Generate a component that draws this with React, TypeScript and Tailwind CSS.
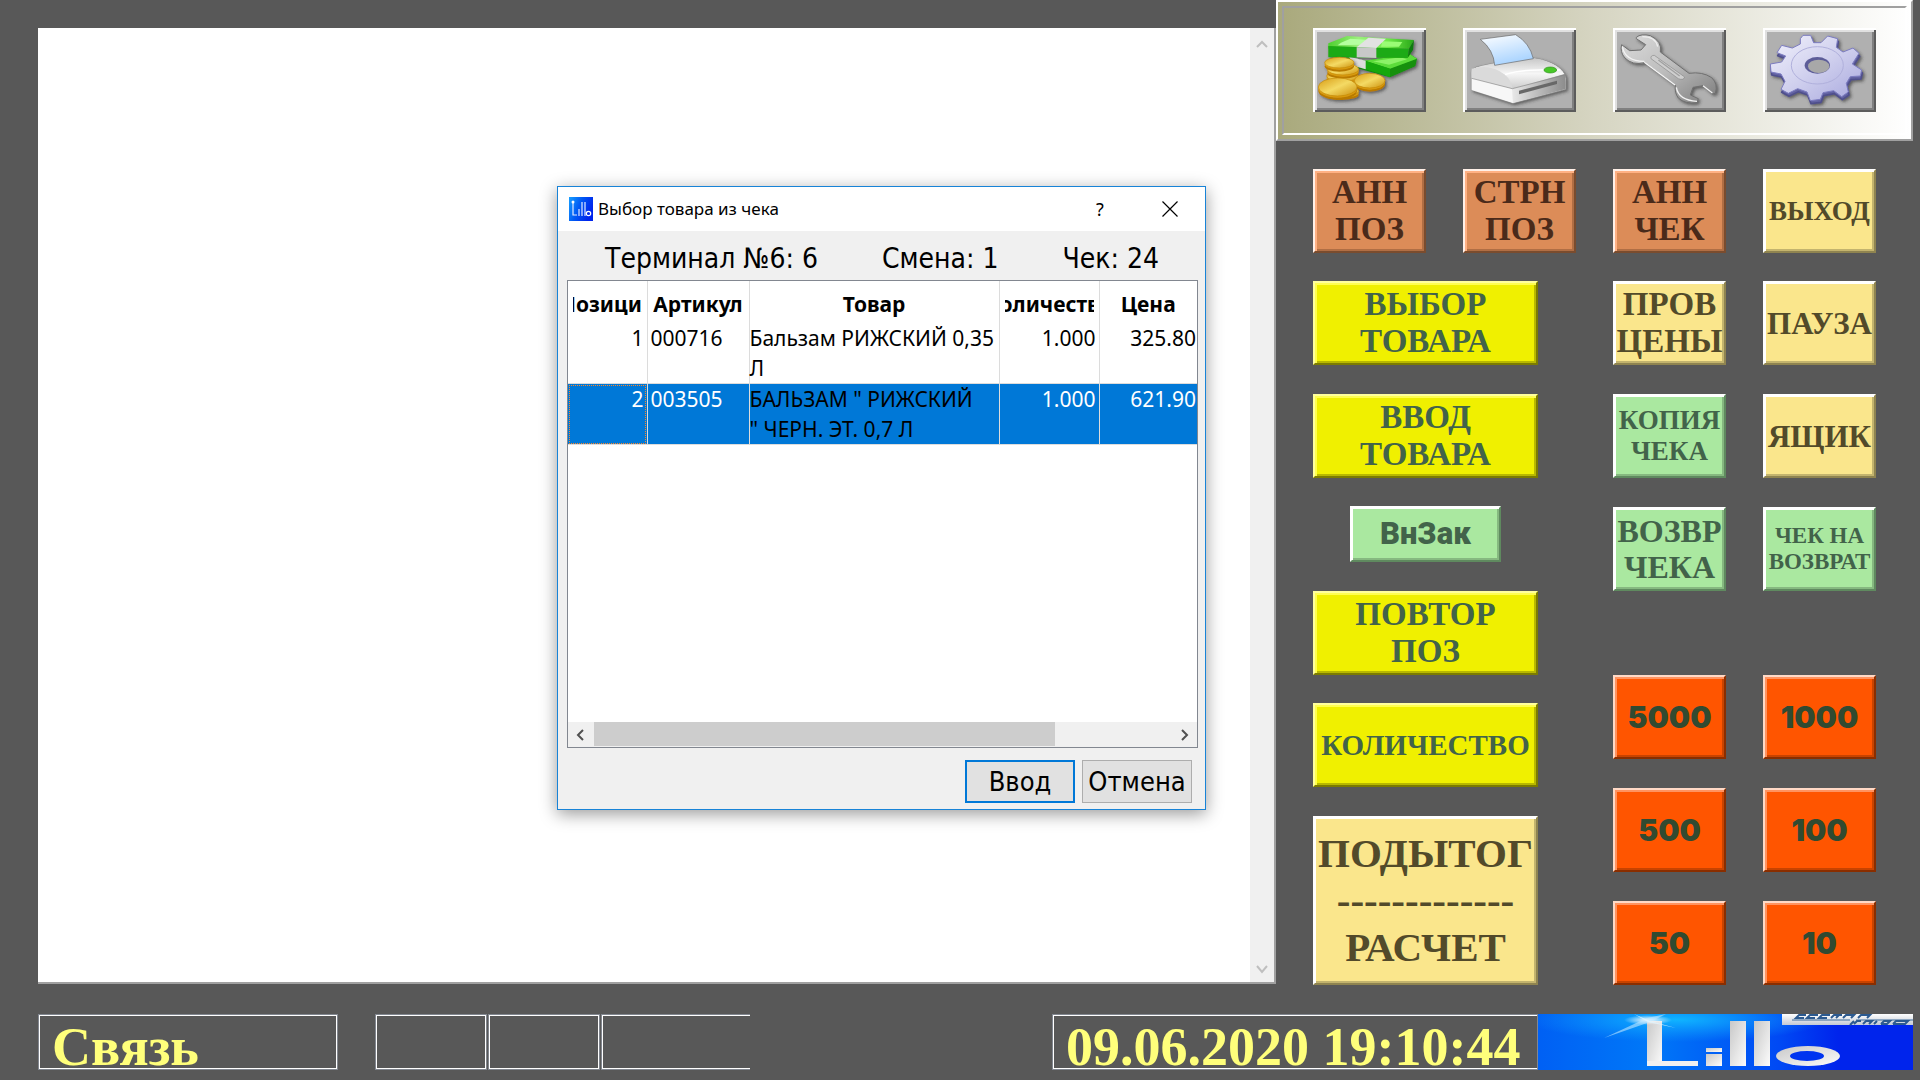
import type { ReactNode } from "react";

type Tone = "orange" | "cream" | "yellow" | "green" | "red";

const tones: Record<Tone, string> = {
  orange:
    "bg-[#dc8c58] text-[#4a2a1a] border-t-[#fff0e8] border-l-[#fff0e8] border-r-[#7a4c2e] border-b-[#7a4c2e] shadow-[inset_2px_2px_0_#ffb184,inset_-2px_-2px_0_#b06e44]",
  cream:
    "bg-[#fae68c] text-[#524a2a] border-t-white border-l-white border-r-[#8f8450] border-b-[#8f8450] shadow-[inset_1px_1px_0_#ffffff,inset_-2px_-2px_0_#c3b46e]",
  yellow:
    "bg-[#f0f000] text-[#42634a] border-t-[#ffff9c] border-l-[#ffff9c] border-r-[#7c7c00] border-b-[#7c7c00] shadow-[inset_2px_2px_0_#ffff50,inset_-2px_-2px_0_#b8b800]",
  green:
    "bg-[#aae8a0] text-[#42634a] border-t-white border-l-white border-r-[#5f8a5f] border-b-[#5f8a5f] shadow-[inset_1px_1px_0_#ffffff,inset_-2px_-2px_0_#86b880]",
  red: "bg-[#ff5500] text-[#314a31] border-t-[#ffd9c6] border-l-[#ffd9c6] border-r-[#8a2e00] border-b-[#8a2e00] shadow-[inset_2px_2px_0_#ff9360,inset_-2px_-2px_0_#c84300]",
};

function Key({ tone, className, lines }: { tone: Tone; className: string; lines: string[] }) {
  return (
    <button
      type="button"
      className={`flex flex-col items-center justify-center border-2 font-bold whitespace-nowrap ${tones[tone]} ${className}`}
    >
      {lines.map((l) => (
        <span key={l}>{l}</span>
      ))}
    </button>
  );
}

function ToolButton({ label, children }: { label: string; children: ReactNode }) {
  return (
    <button
      type="button"
      aria-label={label}
      className="h-[84px] w-[113px] bg-[#b0b0b0] shadow-[inset_2px_2px_0_#ffffff,inset_-2px_-2px_0_#5c5c5c,inset_4px_4px_0_#e0e0e0,inset_-4px_-4px_0_#808080]"
    >
      <svg viewBox="0 0 339 252" className="block h-full w-full">
        {children}
      </svg>
    </button>
  );
}

function Coin({ x, y, rx, ry }: { x: number; y: number; rx: number; ry: number }) {
  return (
    <g>
      <ellipse cx={x} cy={y + 11} rx={rx} ry={ry} fill="#b87a00" />
      <ellipse cx={x} cy={y + 5} rx={rx} ry={ry} fill="#d99b10" />
      <ellipse cx={x} cy={y} rx={rx} ry={ry} fill="url(#gold)" stroke="#c48a08" strokeWidth="2" />
    </g>
  );
}

function MoneyIcon() {
  return (
    <>
      <defs>
        <linearGradient id="gold" x1="0" y1="0" x2="1" y2="1">
          <stop offset="0" stopColor="#d89c14" />
          <stop offset="0.5" stopColor="#f4da64" />
          <stop offset="1" stopColor="#cc900c" />
        </linearGradient>
        <linearGradient id="bill" x1="0" y1="0" x2="1" y2="0">
          <stop offset="0" stopColor="#4fd030" />
          <stop offset="0.35" stopColor="#9cf07c" />
          <stop offset="0.7" stopColor="#6ee848" />
          <stop offset="1" stopColor="#28a818" />
        </linearGradient>
        <filter id="soft" x="-20%" y="-20%" width="140%" height="140%">
          <feDropShadow dx="5" dy="5" stdDeviation="4" floodColor="#303030" floodOpacity="0.65" />
        </filter>
      </defs>
      <g filter="url(#soft)">
        <path d="M100 88 L156 98 L290 78 L312 92 L307 115 L231 148 L100 112Z" fill="#12900c" />
        <path d="M156 98 L290 78 L312 92 L231 122Z" fill="#5bdc3a" />
        <path d="M180 100 L262 88 L282 94 L228 110Z" fill="#8cf268" />
        <path d="M156 98 L231 122 L231 148 L156 122Z" fill="#18a810" />
        <path d="M108 86 L158 98 L158 124 L122 114Z" fill="#dcdcdc" />
        <path d="M46 46 L102 24 L303 36 L288 62 L46 62Z" fill="url(#bill)" />
        <path d="M84 44 L112 32 L160 35 L142 50 L74 52Z" fill="#b4ffa0" />
        <path d="M208 40 L268 42 L258 56 L204 56Z" fill="#9afc74" />
        <path d="M46 54 L288 62 L284 90 L46 88Z" fill="#1faa12" />
        <path d="M288 62 L303 36 L300 66 L284 90Z" fill="#0c7c08" />
        <path d="M166 29 L219 32 L190 60 L131 58Z" fill="#e2e2e2" />
        <path d="M131 58 L190 60 L190 90 L131 88Z" fill="#c8c8c8" />
      </g>
      <g filter="url(#soft)">
        <Coin x={88} y={144} rx={47} ry={17} />
        <Coin x={90} y={124} rx={47} ry={17} />
        <Coin x={79} y={104} rx={44} ry={16} />
        <Coin x={170} y={158} rx={46} ry={22} />
        <Coin x={84} y={190} rx={53} ry={15} />
        <Coin x={74} y={177} rx={58} ry={27} />
      </g>
    </>
  );
}

function PrinterIcon() {
  return (
    <>
      <defs>
        <linearGradient id="paper" x1="0" y1="0" x2="0.4" y2="1">
          <stop offset="0" stopColor="#ffffff" />
          <stop offset="1" stopColor="#aad4ff" />
        </linearGradient>
        <linearGradient id="body" x1="0" y1="0" x2="0" y2="1">
          <stop offset="0" stopColor="#c8c8c8" />
          <stop offset="0.5" stopColor="#f6f6f6" />
          <stop offset="1" stopColor="#cdcdcd" />
        </linearGradient>
        <linearGradient id="side" x1="0" y1="0" x2="1" y2="0">
          <stop offset="0" stopColor="#e8e8e8" />
          <stop offset="1" stopColor="#8c8c8c" />
        </linearGradient>
      </defs>
      <g filter="url(#soft)">
        <path
          d="M25 132 Q27 121 40 117 L95 105 L212 90 Q300 104 309 152 L309 184 L150 226 L25 186Z"
          fill="#e8e8e8"
          stroke="#808080"
          strokeWidth="2"
        />
        <path d="M26 128 Q34 116 98 106 L212 91 Q280 102 304 138 L148 182 L26 151Z" fill="url(#body)" />
        <path d="M26 122 Q84 106 126 140 Q145 156 148 182 L26 151Z" fill="#dadada" />
        <path d="M26 151 L148 182 L150 225 L26 186Z" fill="#f7f7f7" />
        <path d="M148 182 L305 138 Q309 150 308 183 L150 225Z" fill="url(#side)" />
        <path d="M26 151 L148 182 L308 140" fill="none" stroke="#858585" strokeWidth="2" />
        <path d="M168 188 L282 158 L282 168 L168 199Z" fill="#686868" />
        <path d="M126 140 Q175 122 292 126" fill="none" stroke="#ffffff" strokeWidth="4" />
      </g>
      <path
        d="M52 34 L158 20 Q200 45 211 92 L95 112 Q92 65 52 34Z"
        fill="url(#paper)"
        stroke="#666666"
        strokeWidth="2"
      />
      <ellipse cx="262" cy="126" rx="19" ry="9" fill="#48c828" stroke="#2c9018" strokeWidth="2" />
    </>
  );
}

function WrenchIcon() {
  return (
    <>
      <defs>
        <linearGradient id="steel" x1="0" y1="0" x2="1" y2="1">
          <stop offset="0" stopColor="#dcdcdc" />
          <stop offset="0.5" stopColor="#bcbcbc" />
          <stop offset="1" stopColor="#7c7c7c" />
        </linearGradient>
      </defs>
      <path
        filter="url(#soft)"
        d="M70 28 Q84 16 112 23 Q148 40 142 72 L228 136 Q268 130 296 149 Q316 168 307 196 L298 198 L270 173 L240 178 L232 201 L256 212 L252 224 Q216 229 196 210 Q184 194 187 172 L96 104 Q58 113 36 90 Q20 72 26 50 L50 68 L84 66 L98 50 L70 32Z"
        fill="url(#steel)"
        stroke="#6f6f6f"
        strokeWidth="3"
      />
      <path d="M124 82 Q112 82 114 92 L196 152 Q212 158 215 147Z" fill="#cfcfcf" stroke="#8a8a8a" strokeWidth="2" />
      <path d="M136 96 L200 144" stroke="#a0a0a0" strokeWidth="4" />
      <path d="M94 103 L186 171" stroke="#f8f8f8" strokeWidth="4" />
      <path d="M28 56 Q36 100 94 100 M190 178 Q196 216 252 220 M270 173 L298 195" fill="none" stroke="#f2f2f2" strokeWidth="4" />
      <path d="M88 26 Q128 26 134 56" fill="none" stroke="#efefef" strokeWidth="4" />
    </>
  );
}

const gearPath =
  "M112 32 L120 22 L143 22 L152 44 L174 44 L194 24 L224 32 L220 58 L240 72 L270 60 L288 76 L274 98 L268 108 L296 126 L292 144 L262 146 L250 166 L256 192 L236 206 L212 188 L180 194 L172 214 L142 218 L132 192 L104 182 L76 196 L54 184 L66 160 L54 138 L24 132 L22 108 L56 102 L68 84 L42 74 L56 52 L88 60 L112 48Z";

function GearIcon() {
  return (
    <>
      <defs>
        <linearGradient id="gear" x1="0" y1="0" x2="1" y2="1">
          <stop offset="0" stopColor="#f2f2fc" />
          <stop offset="0.5" stopColor="#d0d0ee" />
          <stop offset="1" stopColor="#a8a8de" />
        </linearGradient>
      </defs>
      <g filter="url(#soft)">
        <path
          d={gearPath}
          transform="translate(2 9)"
          fill="#6464a4"
          stroke="#50508c"
          strokeWidth="5"
          strokeLinejoin="round"
        />
        <path d={gearPath} fill="url(#gear)" stroke="#7c7cc0" strokeWidth="3" strokeLinejoin="round" />
      </g>
      <ellipse cx="163" cy="112" rx="78" ry="56" fill="none" stroke="#b0b0dc" strokeWidth="3" />
      <ellipse cx="163" cy="112" rx="38" ry="25" fill="#5c5c98" />
      <ellipse cx="167" cy="115" rx="32" ry="20" fill="#a8a8a8" />
    </>
  );
}

function Banner() {
  return (
    <svg
      viewBox="0 0 375 56"
      preserveAspectRatio="none"
      role="img"
      aria-label="Lillo"
      className="h-14 w-[375px] shrink-0"
    >
      <defs>
        <linearGradient id="blue" x1="0" y1="0" x2="1" y2="0">
          <stop offset="0" stopColor="#0060f4" />
          <stop offset="0.3" stopColor="#0078f8" />
          <stop offset="0.65" stopColor="#0048f4" />
          <stop offset="0.8" stopColor="#0024ec" />
          <stop offset="1" stopColor="#0024ec" />
        </linearGradient>
        <radialGradient id="glow" cx="0.37" cy="0.1" r="0.4">
          <stop offset="0" stopColor="#10b4ff" />
          <stop offset="1" stopColor="#10a0ff" stopOpacity="0" />
        </radialGradient>
        <radialGradient id="star">
          <stop offset="0" stopColor="#ffffff" />
          <stop offset="1" stopColor="#ffffff" stopOpacity="0" />
        </radialGradient>
        <linearGradient id="silver" x1="0" y1="0" x2="1" y2="1">
          <stop offset="0" stopColor="#c8c8c8" />
          <stop offset="0.5" stopColor="#e2e2e2" />
          <stop offset="1" stopColor="#fcfcfc" />
        </linearGradient>
        <linearGradient id="tag" x1="0" y1="0" x2="0" y2="1">
          <stop offset="0" stopColor="#ffffff" />
          <stop offset="1" stopColor="#c4cad4" />
        </linearGradient>
      </defs>
      <rect width="375" height="56" fill="url(#blue)" />
      <rect width="375" height="56" fill="url(#glow)" />
      <rect x="109" y="7" width="15" height="45" fill="url(#silver)" />
      <rect x="109" y="47" width="51" height="5" fill="#f0f0f0" />
      <rect x="168" y="34" width="16" height="4" fill="url(#silver)" />
      <rect x="168" y="40" width="16" height="12" fill="url(#silver)" />
      <rect x="192" y="7" width="16" height="45" fill="url(#silver)" />
      <rect x="216" y="7" width="16" height="45" fill="url(#silver)" />
      <ellipse cx="270" cy="42" rx="32" ry="10" fill="url(#silver)" />
      <ellipse cx="269" cy="42" rx="17" ry="5" fill="#0034f0" />
      <ellipse cx="110" cy="6" rx="24" ry="5" fill="url(#star)" />
      <path d="M66 24 L109 4 L128 0 L112 8Z" fill="#bfe6ff" opacity="0.6" />
      <path d="M96 0 L112 7 L138 14 L110 8Z" fill="#dff4ff" opacity="0.8" />
      <rect x="244" y="0" width="131" height="11" fill="url(#tag)" />
      <path d="M254 6 H312 M318 6 H375" stroke="#3a6a9c" />
      <g fill="none" stroke="#2c5a90" strokeWidth="2">
        <path d="M268 1 H261 L258 4 H266 M280 1 H272 L269 4 H277 M292 1 H284 L281 4 H289 M304 1 H296 L293 4 M298 4 L301 1 M305 4 L308 1 H316 L313 4 M320 4 L323 1 H332 L329 4" />
        <path d="M316 7 L312 11 M323 7 H319 L316 10 M325 10 L328 7 H334 L331 10 M336 10 L339 7 M343 10 L346 7 H352 L349 10 H343 M355 10 L358 7 H370 L367 10 H355" />
      </g>
    </svg>
  );
}

function AppIcon() {
  return (
    <svg viewBox="0 0 24 24" className="size-6" aria-hidden="true">
      <defs>
        <linearGradient id="app" x1="0" y1="0" x2="1" y2="0.4">
          <stop offset="0" stopColor="#18a0ff" />
          <stop offset="0.5" stopColor="#0058f4" />
          <stop offset="1" stopColor="#0024ec" />
        </linearGradient>
      </defs>
      <rect width="24" height="24" fill="url(#app)" />
      <path d="M4 5 V18 H8 M10 12 V19 M13 5 V19 M16 5 V19" fill="none" stroke="#dfe8ff" strokeWidth="1.200" />
      <circle cx="19.500" cy="16.500" r="2.200" fill="none" stroke="#ffffff" strokeWidth="1.200" />
      <circle cx="4" cy="5" r="1.500" fill="#ffffff" />
    </svg>
  );
}

function Chevron({ d, className }: { d: string; className: string }) {
  return (
    <svg viewBox="0 0 12 12" className={className} fill="none" stroke="currentColor" strokeWidth="2" aria-hidden="true">
      <path d={d} />
    </svg>
  );
}

const columns = ["Позиция", "Артикул", "Товар", "Количество", "Цена"];
const rows = [
  { pos: "1", code: "000716", name: ["Бальзам РИЖСКИЙ 0,35", "Л"], qty: "1.000", price: "325.80", selected: false },
  { pos: "2", code: "003505", name: ['БАЛЬЗАМ " РИЖСКИЙ', '" ЧЕРН. ЭТ. 0,7 Л'], qty: "1.000", price: "621.90", selected: true },
];

function ItemDialog() {
  return (
    <div
      role="dialog"
      aria-labelledby="dialog-title"
      className="absolute top-[186px] left-[557px] flex w-[649px] flex-col border border-[#1883d7] bg-[#f0f0f0] font-['Noto_Sans',sans-serif] text-black shadow-[0_4px_16px_rgba(0,0,0,0.4)]"
    >
      <div className="flex h-11 items-center bg-white pl-[11px]">
        <AppIcon />
        <h1 id="dialog-title" className="ml-[5px] flex-1 text-[17px]">
          Выбор товара из чека
        </h1>
        <button type="button" className="w-[70px] text-lg" aria-label="Справка">
          ?
        </button>
        <button type="button" className="flex w-[70px] justify-center" aria-label="Закрыть">
          <svg viewBox="0 0 16 16" className="size-4" stroke="#000" strokeWidth="1.200">
            <path d="M0.500 0.500 L15.500 15.500 M15.500 0.500 L0.500 15.500" />
          </svg>
        </button>
      </div>
      <div className="flex h-[49px] items-center justify-between pt-[6px] pr-[46px] pl-[47px] font-['DejaVu_Sans_Condensed','DejaVu_Sans',sans-serif] text-[28px]">
        <span>Терминал №6: 6</span>
        <span>Смена: 1</span>
        <span>Чек: 24</span>
      </div>
      <div className="mr-[7px] ml-[9px] flex h-[468px] flex-col border border-[#828790] bg-white">
        <table className="w-full table-fixed border-collapse text-[21px] leading-[30px]">
          <colgroup>
            <col className="w-[79px]" />
            <col className="w-[102px]" />
            <col className="w-[250px]" />
            <col className="w-[100px]" />
            <col />
          </colgroup>
          <thead>
            <tr className="h-[42px]">
              {columns.map((c) => (
                <th key={c} className="border-r border-[#dcdcdc] px-[5px] pt-[3px] font-bold last:border-r-0">
                  <span className="flex justify-center overflow-hidden whitespace-nowrap">{c}</span>
                </th>
              ))}
            </tr>
          </thead>
          <tbody>
            {rows.map((r) => (
              <tr
                key={r.pos}
                className={`border-b border-[#dcdcdc] align-top ${r.selected ? "bg-[#0078d7] text-white" : ""}`}
              >
                <td
                  className={`border-r border-[#dcdcdc] pr-[3px] text-right ${r.selected ? "outline-1 -outline-offset-2 outline-[#ff8728] outline-dotted" : ""}`}
                >
                  {r.pos}
                </td>
                <td className="border-r border-[#dcdcdc] pl-[3px]">{r.code}</td>
                <td className="border-r border-[#dcdcdc] whitespace-nowrap text-black">
                  {r.name[0]}
                  <br />
                  {r.name[1]}
                </td>
                <td className="border-r border-[#dcdcdc] pr-[3px] text-right">{r.qty}</td>
                <td className="pr-[1px] text-right">{r.price}</td>
              </tr>
            ))}
          </tbody>
        </table>
        <div className="mt-auto flex h-[25px] items-stretch bg-[#f0f0f0] text-[#505050]">
          <button type="button" aria-label="Влево" className="flex w-[26px] items-center justify-center">
            <Chevron d="M8 1 L3 6 L8 11" className="size-3" />
          </button>
          <div className="mb-px w-[461px] bg-[#cdcdcd]" />
          <button type="button" aria-label="Вправо" className="ml-auto flex w-[26px] items-center justify-center">
            <Chevron d="M4 1 L9 6 L4 11" className="size-3" />
          </button>
        </div>
      </div>
      <div className="flex justify-end gap-[7px] pt-3 pr-[13px] pb-[6px] font-['DejaVu_Sans_Condensed','DejaVu_Sans',sans-serif] text-[27px]">
        <button type="button" className="h-[43px] w-[110px] border-2 border-[#0078d7] bg-[#e1e1e1] leading-none">
          Ввод
        </button>
        <button type="button" className="h-[43px] w-[110px] border border-[#adadad] bg-[#e1e1e1] leading-none">
          Отмена
        </button>
      </div>
    </div>
  );
}

export default function App() {
  return (
    <div className="relative flex min-h-screen w-full flex-col bg-[#585858] font-['Liberation_Serif',serif]">
      <div className="flex flex-1">
        <main className="mt-7 mb-px ml-[38px] flex flex-1 justify-end border-r-2 border-b-2 border-[#a0a0a0] bg-white">
          <div className="flex w-6 flex-col items-center justify-between bg-[#f0f0f0] pt-[10px] pb-[7px] text-[#bfbfbf]">
            <Chevron d="M1 9 L6 4 L11 9" className="size-3" />
            <Chevron d="M1 3 L6 9 L11 3" className="size-3" />
          </div>
        </main>
        <aside className="mr-[7px] w-[637px]">
          <div className="border-2 border-t-white border-r-[#a0a0a0] border-b-[#a0a0a0] border-l-white bg-linear-to-r from-[#a9a97c] via-[#d6d5c2] to-white p-1">
            <div className="flex justify-between border-2 border-t-[#a0a0a0] border-r-white border-b-white border-l-[#a0a0a0] pt-5 pr-[29px] pb-[21px] pl-[29px]">
              <ToolButton label="Деньги">
                <MoneyIcon />
              </ToolButton>
              <ToolButton label="Печать">
                <PrinterIcon />
              </ToolButton>
              <ToolButton label="Сервис">
                <WrenchIcon />
              </ToolButton>
              <ToolButton label="Настройки">
                <GearIcon />
              </ToolButton>
            </div>
          </div>
          <div className="flex flex-col gap-7 px-[37px] pt-7">
            <div className="flex justify-between">
              <Key tone="orange" className="h-[84px] w-[113px] text-[33px] leading-[37px]" lines={["АНН", "ПОЗ"]} />
              <Key tone="orange" className="h-[84px] w-[113px] text-[33px] leading-[37px]" lines={["СТРН", "ПОЗ"]} />
              <Key tone="orange" className="h-[84px] w-[113px] text-[33px] leading-[37px]" lines={["АНН", "ЧЕК"]} />
              <Key tone="cream" className="h-[84px] w-[113px] text-[27px] leading-[31px]" lines={["ВЫХОД"]} />
            </div>
            <div className="flex min-h-[704px] justify-between">
              <div className="flex w-[225px] flex-col justify-between">
                <Key tone="yellow" className="h-[84px] text-[33px] leading-[37px]" lines={["ВЫБОР", "ТОВАРА"]} />
                <Key tone="yellow" className="h-[84px] text-[33px] leading-[37px]" lines={["ВВОД", "ТОВАРА"]} />
                <Key
                  tone="green"
                  className="mx-auto h-14 w-[151px] font-['Roboto',sans-serif] text-[31px] font-black!"
                  lines={["ВнЗак"]}
                />
                <Key tone="yellow" className="h-[84px] text-[33px] leading-[37px]" lines={["ПОВТОР", "ПОЗ"]} />
                <Key tone="yellow" className="h-[84px] text-[29px] leading-[37px]" lines={["КОЛИЧЕСТВО"]} />
                <Key
                  tone="cream"
                  className="h-[169px] text-[41px] leading-[47px]"
                  lines={["ПОДЫТОГ", "-------------", "РАСЧЕТ"]}
                />
              </div>
              <div className="flex w-[263px] flex-col justify-between">
                <div className="grid grid-cols-2 gap-x-[37px] gap-y-[29px]">
                  <Key tone="cream" className="h-[84px] text-[33px] leading-[37px]" lines={["ПРОВ", "ЦЕНЫ"]} />
                  <Key tone="cream" className="h-[84px] text-[31px] leading-[37px]" lines={["ПАУЗА"]} />
                  <Key tone="green" className="h-[84px] text-[27px] leading-[31px]" lines={["КОПИЯ", "ЧЕКА"]} />
                  <Key tone="cream" className="h-[84px] text-[31px] leading-[37px]" lines={["ЯЩИК"]} />
                  <Key tone="green" className="h-[84px] text-[32px] leading-[36px]" lines={["ВОЗВР", "ЧЕКА"]} />
                  <Key tone="green" className="h-[84px] text-[23px] leading-[26px]" lines={["ЧЕК НА", "ВОЗВРАТ"]} />
                </div>
                <div className="grid grid-cols-2 gap-x-[37px] gap-y-[29px] font-['Inter',sans-serif] text-[30px]">
                  {["5000", "1000", "500", "100", "50", "10"].map((n) => (
                    <Key key={n} tone="red" className="h-[84px] font-black!" lines={[n]} />
                  ))}
                </div>
              </div>
            </div>
          </div>
        </aside>
      </div>
      <footer className="mt-[29px] mb-[10px] flex h-14 pr-[7px] pl-[38px] text-[54px] leading-[62px] font-bold text-[#ffff7b]">
        <div className="w-[300px] border-2 border-white pl-3 outline-1 -outline-offset-1 outline-[#828790]">Связь</div>
        <div className="ml-[37px] w-[112px] border-2 border-white outline-1 -outline-offset-1 outline-[#828790]" />
        <div className="ml-px w-[112px] border-2 border-white outline-1 -outline-offset-1 outline-[#828790]" />
        <div className="ml-px w-[149px] border-y border-l border-[#828790]">
          <div className="h-full border-y border-l border-white" />
        </div>
        <div className="ml-auto w-[486px] border-2 border-r-0 border-white pl-3 whitespace-nowrap outline-1 -outline-offset-1 outline-[#828790]">
          09.06.2020 19:10:44
        </div>
        <Banner />
      </footer>
      <ItemDialog />
    </div>
  );
}
